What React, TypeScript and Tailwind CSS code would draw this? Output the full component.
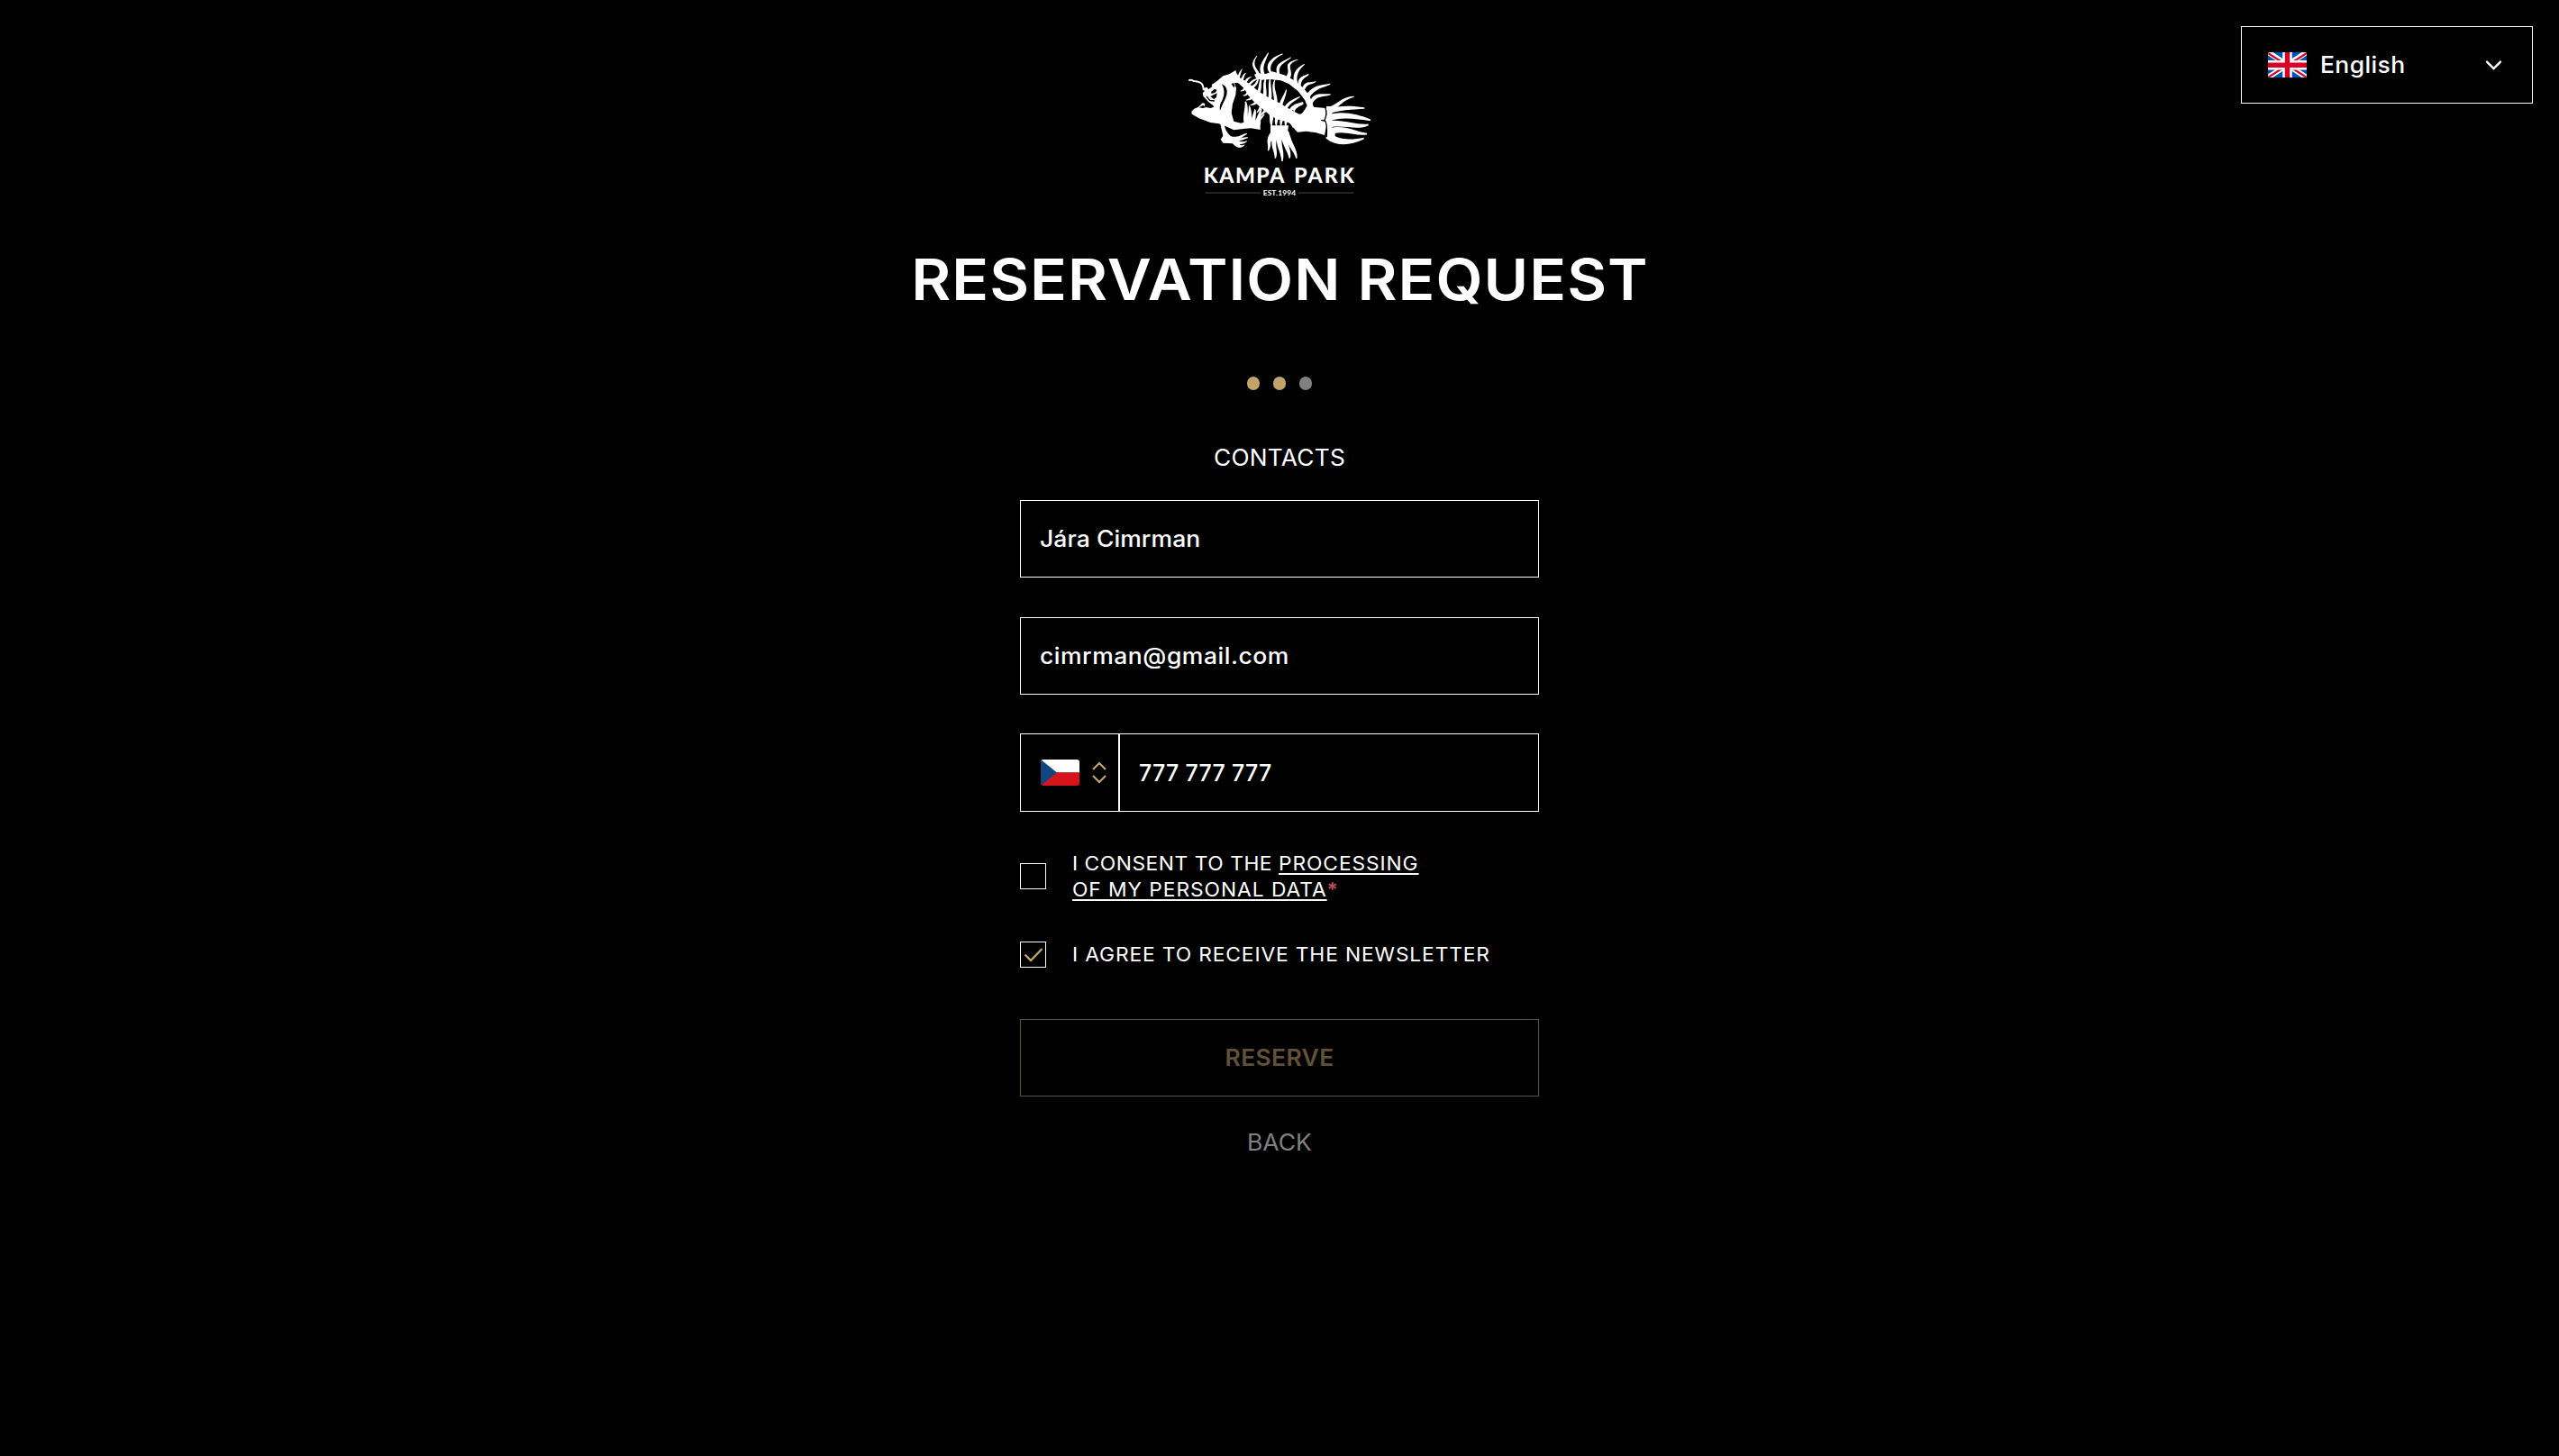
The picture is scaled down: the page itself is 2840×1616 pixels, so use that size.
import React from 'react';

type Pt = [number, number];
type Spine = [base: Pt, c1: Pt, c2: Pt, tip: Pt, width: number];

/* Tapered bone: wide at the base, pointed at the tip. */
function taper([b, c1, c2, t, w]: Spine): string {
  const dx = t[0] - b[0];
  const dy = t[1] - b[1];
  const len = Math.hypot(dx, dy) || 1;
  const nx = -dy / len;
  const ny = dx / len;
  const at = (p: Pt, k: number) => `${(p[0] + nx * w * k).toFixed(1)} ${(p[1] + ny * w * k).toFixed(1)}`;
  return `M${at(b, 0.65)}C${at(c1, 0.5)} ${at(c2, 0.5)} ${at(t, 0.14)}L${at(t, -0.14)}C${at(c2, -0.5)} ${at(c1, -0.5)} ${at(b, -0.65)}Z`;
}

const bones: Spine[] = [
  // dorsal spines
  [[260, 102], [258, 80], [228, 72], [255, 36], 9],
  [[276, 100], [264, 74], [276, 58], [293, 26], 11],
  [[306, 98], [280, 72], [306, 42], [341, 29], 11],
  [[328, 100], [316, 66], [338, 60], [368, 41], 10],
  [[358, 108], [378, 84], [336, 64], [391, 49], 11],
  [[384, 124], [378, 96], [392, 78], [413, 64], 11],
  [[396, 136], [396, 106], [416, 106], [427, 97], 10],
  [[408, 150], [420, 120], [430, 132], [451, 121], 10],
  [[424, 170], [448, 138], [466, 140], [499, 130], 12],
  [[434, 196], [446, 160], [470, 170], [500, 164], 12],
  // tail rays
  [[484, 218], [530, 206], [530, 180], [578, 172], 12],
  [[486, 222], [530, 208], [570, 208], [613, 210], 14],
  [[486, 246], [530, 226], [590, 238], [633, 250], 18],
  [[486, 266], [530, 252], [590, 278], [626, 265], 18],
  [[490, 290], [540, 270], [580, 296], [621, 296], 17],
  [[486, 298], [520, 326], [560, 328], [611, 311], 20],
  // ribs above the backbone
  [[234, 142], [252, 136], [258, 122], [260, 106], 8],
  [[256, 164], [270, 146], [262, 122], [272, 104], 9],
  [[276, 182], [290, 156], [272, 134], [287, 104], 10],
  [[294, 194], [306, 160], [292, 140], [300, 106], 10],
  [[314, 202], [326, 170], [300, 150], [316, 112], 10],
  [[332, 210], [336, 184], [346, 176], [353, 148], 10],
  [[346, 222], [356, 190], [376, 186], [398, 172], 9],
  [[362, 230], [370, 202], [386, 200], [408, 190], 9],
  // neck spikes
  [[190, 110], [200, 98], [196, 92], [206, 80], 7],
  [[202, 118], [212, 108], [206, 104], [218, 93], 7],
  [[216, 124], [224, 114], [222, 112], [236, 106], 7],
  [[226, 136], [236, 122], [246, 114], [262, 111], 7],
  // spikes under the backbone
  [[216, 140], [212, 150], [208, 152], [200, 154], 7],
  [[226, 154], [222, 166], [216, 168], [208, 168], 7],
  [[240, 170], [234, 182], [228, 180], [218, 184], 7],
  [[256, 184], [250, 196], [242, 198], [232, 200], 8],
  [[272, 196], [266, 210], [262, 218], [254, 226], 8],
  [[288, 206], [284, 222], [272, 228], [262, 240], 8],
  // pectoral spikes
  [[224, 266], [210, 240], [224, 214], [217, 188], 14],
  [[234, 262], [228, 236], [234, 222], [229, 202], 12],
  [[246, 262], [240, 240], [250, 230], [248, 214], 12],
  [[256, 262], [258, 244], [264, 232], [270, 212], 11],
  [[256, 262], [264, 246], [270, 240], [280, 230], 8],
  // ribs joining the lower fin
  [[302, 222], [306, 244], [300, 254], [304, 270], 12],
  [[320, 232], [324, 246], [316, 254], [320, 270], 11],
  [[336, 240], [340, 250], [332, 256], [336, 272], 10],
  [[350, 246], [354, 254], [348, 260], [352, 272], 9],
  [[364, 250], [372, 264], [376, 266], [376, 276], 9],
  // lower fin tentacles
  [[308, 292], [286, 322], [302, 330], [292, 352], 12],
  [[320, 298], [300, 334], [322, 350], [316, 377], 14],
  [[332, 298], [322, 336], [342, 350], [339, 387], 15],
  [[344, 298], [348, 336], [364, 350], [364, 377], 15],
  [[352, 292], [362, 330], [384, 350], [387, 377], 15],
  // hand
  [[180, 310], [196, 312], [206, 300], [222, 295], 9],
  [[180, 318], [200, 316], [212, 310], [225, 308], 8],
  [[178, 322], [200, 326], [210, 328], [222, 320], 9],
  [[176, 322], [190, 338], [202, 342], [214, 332], 10],
];

function Logo() {
  return (
    <svg className="h-[175px] w-[220px]" viewBox="0 0 660 525" role="img" aria-label="Kampa Park">
      <g fill="#fff">
        {bones.map((b, i) => (
          <path key={i} d={taper(b)} />
        ))}
        {/* antenna */}
        <path d="M30 117Q38 114 44 120Q56 120 66 125Q76 130 77 148" fill="none" stroke="#fff" strokeWidth="6" strokeLinecap="round" />
        {/* skull and jaw */}
        <path d="M76 144L88 140L94 148L106 138L104 132L122 120L142 103L163 97L184 84L188 96L200 110L196 118L180 126L186 144L184 166L174 196L170 226L178 254L202 260L226 252L246 250L268 254L266 268L266 282L236 277L216 278L178 283L150 270L128 262L100 258L62 244L38 230L37 221L46 212L60 206L74 193L82 195L80 206L100 210L112 206L108 200L94 190L76 170L74 160L80 154Z" />
        {/* backbone and rear body */}
        <path d="M166 112L192 108L214 118L236 134L262 155L294 175L332 194L362 212L396 230L424 224L440 206L484 210L490 250L480 300L452 292L420 287L390 290L380 280L372 264L350 254L320 246L296 232L270 210L246 190L226 168L212 144L192 126L170 126Z" />
        {/* dorsal arch */}
        <path d="M246 98L256 94L284 96L306 88L326 94L346 100L384 120L408 142L430 168L444 206L440 224L398 236L412 218L422 202L414 182L392 154L362 130L334 118L300 114L270 116L252 110Z" />
        <path d="M372 214Q388 196 408 192Q416 196 396 204Q384 210 380 222Z" />
        {/* tail root */}
        <path d="M486 204L502 204L506 224L502 240L508 256L504 272L516 288L514 314L522 324L500 318L486 306L490 250Z" />
        {/* lower fin and forearm */}
        <path d="M300 268L360 268L358 284L368 312L350 308L338 314L326 308L312 318L296 322L300 296Z" />
        <path d="M132 258L146 262Q148 288 168 304L190 308L196 322L200 338L190 338L176 328L142 326L134 314L142 302Z" />
      </g>
      <g fill="#000">
        <path d="M138 130L148 136Q162 152 150 178Q140 198 132 218Q128 200 140 182Q152 156 138 130Z" />
        <path d="M102 156L114 146L122 150L116 158L104 162Z" />
        <path d="M100 172L110 166L122 160L120 174L112 180Z" />
        <path d="M62 208L76 200L84 208L74 210Z" />
        <path d="M170 130L176 126L182 134L178 142Z" />
      </g>
      {/* face and tail joint */}
      <g fill="none" stroke="#000" strokeLinecap="round">
        <path d="M88 172L98 184L112 186" strokeWidth="4" />
        <path d="M483 210Q490 228 480 250Q490 260 487 304M480 252L470 251" strokeWidth="4" />
        <path d="M386 222Q398 206 412 202" strokeWidth="4" />
      </g>
      <path d="M82 492H268M392 492H578" stroke="#2e2e2e" strokeWidth="4" />
      <text y="458" fill="#fff" className="font-['Lato'] text-[69px] font-black">
        <tspan x="77" textLength="269">KAMPA</tspan> <tspan x="379" textLength="199">PARK</tspan>
      </text>
      <text x="275" y="501" textLength="109" fill="#fff" className="font-['Lato'] text-[25px] font-bold">EST.1994</text>
    </svg>
  );
}

function FlagUK() {
  return (
    <svg className="h-7 w-[43px] rounded-[2px]" viewBox="0 0 43 28">
      <rect width="43" height="28" fill="#0052b4" />
      <path d="M0 0L43 28M43 0L0 28" stroke="#fff" strokeWidth="6" />
      <path d="M0 1L18 12.5M43 1L25 12.5M0 28L18 16.5M43 28L25 16.5" stroke="#d80027" strokeWidth="2.2" />
      <path d="M21.5 0V28M0 14.3H43" stroke="#fff" strokeWidth="10.5" />
      <path d="M21.5 0V28M0 14.3H43" stroke="#d80027" strokeWidth="5.4" />
    </svg>
  );
}

function FlagCZ() {
  return (
    <svg className="h-[29px] w-[43px] rounded-[3px]" viewBox="0 0 43 29">
      <rect width="43" height="14.5" fill="#fff" />
      <rect y="14.5" width="43" height="14.5" fill="#d7141a" />
      <path d="M0 0L18 14.5L0 29Z" fill="#11457e" />
    </svg>
  );
}

export default function App() {
  return (
    <div className="relative flex h-[1616px] w-[2840px] flex-col items-center overflow-hidden bg-black font-['Inter',sans-serif] text-white">
      <button className="absolute top-[29px] right-[29px] flex h-[86px] w-[324px] items-center border border-white pr-[33px] pl-[29px]">
        <FlagUK />
        <span className="ml-[15px] origin-left scale-x-106 text-[25px] leading-[36px] font-medium tracking-[0.36px]">English</span>
        <svg className="ml-auto h-[11px] w-[19px]" viewBox="0 0 19 11" fill="none" stroke="#fff" strokeWidth="2.4" strokeLinecap="round">
          <path d="M2 1.6L9.5 9L17 1.6" />
        </svg>
      </button>

      <header className="mt-[50px] flex flex-col items-center">
        <Logo />
        <h1 className="mt-[45px] h-20 origin-center scale-x-107 text-[63px] leading-[80px] font-semibold tracking-[1px] whitespace-nowrap">RESERVATION REQUEST</h1>
      </header>

      <div className="mt-[68px] flex h-[15px] gap-[15px]">
        <span className="w-[14px] rounded-full bg-[#c2a46b]" />
        <span className="w-[14px] rounded-full bg-[#c2a46b]" />
        <span className="w-[14px] rounded-full bg-[#808080]" />
      </div>

      <form className="mt-[57px] flex w-[576px] flex-col">
        <h2 className="scale-x-105 text-center text-[25px] leading-[36px] font-normal tracking-[0.25px]">CONTACTS</h2>

        <div className="mt-[29px] flex h-[86px] items-center border border-white pl-[21px]">
          <span className="origin-left scale-x-106 text-[25px] leading-[36px] font-medium tracking-[0.08px]">Jára Cimrman</span>
        </div>
        <div className="mt-[44px] flex h-[86px] items-center border border-white pl-[21px]">
          <span className="origin-left scale-x-106 text-[25px] leading-[36px] font-medium tracking-[0.5px]">cimrman@gmail.com</span>
        </div>
        <div className="mt-[43px] flex h-[87px] border border-white">
          <div className="flex w-[110px] items-center border-r-2 border-white pl-[22px]">
            <FlagCZ />
            <svg className="ml-[14px] h-[27px] w-4" viewBox="0 0 16 27" fill="none" stroke="#c2a46b" strokeWidth="2.2">
              <path d="M1 10L8 3L15 10M1 17L8 24L15 17" />
            </svg>
          </div>
          <span className="flex items-center pl-[21px] text-[25px] leading-[36px] font-medium tracking-[0.25px] whitespace-pre">777 777 777</span>
        </div>

        <label className="mt-[42px] flex h-[59px] items-center">
          <span className="mb-px h-[29px] w-[29px] border border-white" />
          <span className="ml-[29px] flex origin-left scale-x-106 flex-col pt-px text-[21.5px] leading-[29px] whitespace-nowrap">
            <span className="tracking-[0.64px]">
              <span className="tracking-[0.5px]">I CONSENT TO THE </span>
              <a className="tracking-[0.84px] underline decoration-2 underline-offset-[3px]">PROCESSING</a>
            </span>
            <span>
              <a className="tracking-[0.88px] underline decoration-2 underline-offset-[3px]">OF MY PERSONAL DATA</a>
              <span className="font-semibold text-[#c44a5f]">*</span>
            </span>
          </span>
        </label>

        <label className="mt-[43px] flex h-[29px] items-center">
          <span className="flex h-[29px] w-[29px] items-center justify-center border border-white">
            <svg className="h-[18px] w-[22px]" viewBox="0 0 22 18" fill="none" stroke="#c2a46b" strokeWidth="2.4">
              <path d="M1.5 8.5L8 15L20.5 2" />
            </svg>
          </span>
          <span className="ml-[29px] origin-left scale-x-106 text-[21.5px] leading-[29px] tracking-[0.81px] whitespace-nowrap">I AGREE TO RECEIVE THE NEWSLETTER</span>
        </label>

        <button type="button" className="mt-[57px] flex h-[86px] items-center justify-center border border-[#615236] text-[#615236]">
          <span className="scale-x-106 text-[25px] leading-[36px] font-semibold tracking-[0.3px]">RESERVE</span>
        </button>
        <button type="button" className="mt-[33px] text-center text-[25px] leading-[36px] text-[#808080]">
          <span className="inline-block scale-x-106">BACK</span>
        </button>
      </form>
    </div>
  );
}
